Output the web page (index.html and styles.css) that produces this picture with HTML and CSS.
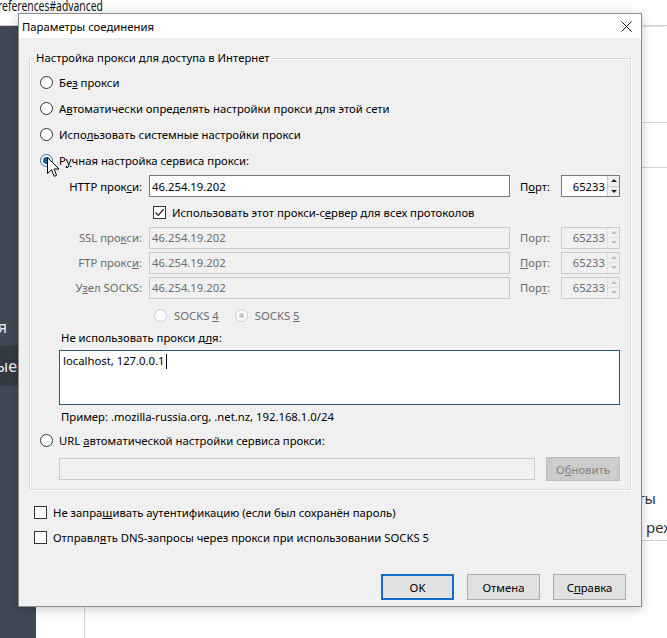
FILE: index.html
```html
<!DOCTYPE html>
<html lang="ru">
<head>
<meta charset="utf-8">
<title>Параметры соединения</title>
<link rel="stylesheet" href="styles.css">
</head>
<body>
<div class="page">
  <div class="urlbar"><span class="url">references#advanced</span></div>
  <div class="main">
    <aside class="sidebar">
      <div class="side-item side-a"><span>Синхронизация</span></div>
      <div class="side-item side-b"><span>Дополнительные</span></div>
    </aside>
    <div class="content">
      <div class="content-inner">
        <div class="pane pane-top"></div>
        <div class="pane pane-box"></div>
        <div class="pane pane-gap"></div>
        <div class="pane-text pane-t1">Настроить параметры работы</div>
        <div class="pane-text pane-t2"><span>Автономный режим</span></div>
        <div class="pane pane-rule"></div>
      </div>
    </div>
  </div>
</div>

<div class="dialog">
  <div class="titlebar">
    <span class="title">Параметры соединения</span>
    <span class="close">
      <svg width="11" height="11" viewBox="0 0 11 11"><path d="M0.5 0.5 L10.5 10.5 M10.5 0.5 L0.5 10.5" stroke="#1a1a1a" stroke-width="1" fill="none"/></svg>
    </span>
  </div>
  <div class="body">
    <fieldset class="group">
      <legend>Настройка прокси для доступа в Интернет</legend>
      <div class="group-inner">
        <div class="row radio-row"><span class="radio"></span><span>Бе<u>з</u> прокси</span></div>
        <div class="row radio-row"><span class="radio"></span><span>А<u>в</u>томатически определять настройки прокси для этой сети</span></div>
        <div class="row radio-row"><span class="radio"></span><span>Испо<u>л</u>ьзовать системные настройки прокси</span></div>
        <div class="row radio-row"><span class="radio radio-on"></span><span>Р<u>у</u>чная настройка сервиса прокси:</span></div>

        <div class="row proxy-row">
          <span class="plabel">HTTP прок<u>с</u>и:</span>
          <span class="edit host">46.254.19.202</span>
          <span class="portlabel">П<u>о</u>рт:</span>
          <span class="edit port"><span class="portval">65233</span><span class="spin"><span class="spin-up"></span><span class="spin-down"></span></span></span>
        </div>
        <div class="row check-row all-proto"><span class="check check-on"><svg width="11" height="11" viewBox="0 0 11 11"><path d="M1.5 5.5 L4.3 8.4 L9.6 2.2" stroke="#222" stroke-width="1.3" fill="none"/></svg></span><span>Использовать этот прокси-с<u>е</u>рвер для всех протоколов</span></div>

        <div class="row proxy-row proxy-small disabled">
          <span class="plabel">SSL про<u>к</u>си:</span>
          <span class="edit host">46.254.19.202</span>
          <span class="portlabel">Порт:</span>
          <span class="edit port"><span class="portval">65233</span><span class="spin"><span class="spin-up"></span><span class="spin-down"></span></span></span>
        </div>
        <div class="row proxy-row proxy-small disabled">
          <span class="plabel">FTP прокс<u>и</u>:</span>
          <span class="edit host">46.254.19.202</span>
          <span class="portlabel"><u>П</u>орт:</span>
          <span class="edit port"><span class="portval">65233</span><span class="spin"><span class="spin-up"></span><span class="spin-down"></span></span></span>
        </div>
        <div class="row proxy-row proxy-small disabled">
          <span class="plabel">У<u>з</u>ел SOCKS:</span>
          <span class="edit host">46.254.19.202</span>
          <span class="portlabel">Пор<u>т</u>:</span>
          <span class="edit port"><span class="portval">65233</span><span class="spin"><span class="spin-up"></span><span class="spin-down"></span></span></span>
        </div>

        <div class="row socks-row disabled">
          <span class="radio radio-dis"></span><span class="socks4">SOCKS <u>4</u></span>
          <span class="radio radio-dis radio-dis-on"></span><span>SOCKS <u>5</u></span>
        </div>

        <div class="sub label-row">Не использовать прокси д<u>л</u>я:</div>
        <div class="sub textarea"><span>localhost, 127.0.0.1</span><span class="caret"></span></div>
        <div class="sub example">Пример: .mozilla-russia.org, .net.nz, 192.168.1.0/24</div>

        <div class="row radio-row url-radio"><span class="radio"></span><span>URL <u>а</u>втоматической настройки сервиса прокси:</span></div>
        <div class="sub url-row">
          <span class="edit url-edit"></span>
          <span class="btn btn-dis">О<u>б</u>новить</span>
        </div>
      </div>
    </fieldset>

    <div class="row check-row bottom-check first"><span class="check"></span><span>Не запра<u>ш</u>ивать аутентификацию (если был сохранён пароль)</span></div>
    <div class="row check-row bottom-check"><span class="check"></span><span>Отправл<u>я</u>ть DNS-запросы через прокси при использовании SOCKS 5</span></div>

    <div class="buttons">
      <span class="btn btn-default">OK</span>
      <span class="btn">Отмена</span>
      <span class="btn">С<u>п</u>равка</span>
    </div>
  </div>
  <svg class="cursor" width="13" height="21" viewBox="0 0 13 21"><path d="M0.5 0.5 L0.5 16.5 L4.5 12.8 L7.2 19.3 L9.6 18.3 L7 12 L12 12 Z" fill="#fff" stroke="#000" stroke-width="1" stroke-linejoin="miter"/></svg>
</div>
</body>
</html>
```
FILE: styles.css
```css
* { box-sizing: border-box; }
html, body { margin: 0; padding: 0; }
body {
  width: 667px;
  height: 638px;
  overflow: hidden;
  background: #fff;
  font-family: "Noto Sans", "Open Sans", sans-serif;
  position: relative;
}

/* background page */
.page { display: flex; flex-direction: column; height: 638px; }
.urlbar {
  height: 26px;
  border-bottom: 1px solid #d0d0d0;
  box-shadow: 0 4px 0 -3px #e6e6e6;
  overflow: hidden;
  white-space: nowrap;
}
.url {
  display: block;
  margin-left: -2px;
  margin-top: -2px;
  font-size: 14px;
  line-height: 16px;
  color: #111;
  transform: scaleX(0.74);
  transform-origin: 0 0;
}
.main { flex: 1; display: flex; }
.sidebar {
  width: 36px;
  background: #3f4853;
  display: flex;
  flex-direction: column;
  padding-top: 286px;
}
.side-item {
  display: flex;
  justify-content: flex-end;
  align-items: center;
  overflow: hidden;
  white-space: nowrap;
  color: #e8eaed;
  font-size: 16px;
}
.side-a { height: 30px; padding-right: 29px; }
.side-b { height: 40px; padding-right: 19px; background: #333a43; margin-top: 4px; }

.content { flex: 1; padding-left: 48px; min-width: 0; }
.content-inner {
  height: 100%;
  border-left: 1px solid #d4d4d4;
  display: flex;
  flex-direction: column;
}
.pane-top { height: 96px; }
.pane-box { height: 46px; border-top: 1px solid #d8d8d8; border-bottom: 1px solid #d8d8d8; }
.pane-gap { height: 317px; }
.pane-text { font-size: 15px; color: #333; height: 26px; line-height: 26px; white-space: nowrap; overflow: hidden; }
.pane-t1 { text-align: right; padding-right: 11px; }
.pane-t2 { margin-top: 3px; padding-left: 464px; }
.pane-rule { height: 1px; background: #d0d0d0; margin-top: 0; }

/* dialog */
.dialog {
  position: absolute;
  left: 18px;
  top: 13px;
  width: 624px;
  height: 594px;
  border: 1px solid #8e8e8e;
  background: #f0f0f0;
  box-shadow: 0 2px 10px rgba(0,0,0,0.22);
  display: flex;
  flex-direction: column;
  font-size: 11.3px;
  color: #000;
}
.titlebar {
  height: 24px;
  background: #fff;
  display: flex;
  align-items: center;
  justify-content: space-between;
  padding-left: 3px;
}
.title { font-size: 11.3px; }
.close { width: 30px; height: 24px; display: flex; align-items: center; justify-content: center; }

.body {
  flex: 1;
  padding: 12px 10px 0 10px;
  display: flex;
  flex-direction: column;
}
.group {
  margin: 0;
  padding: 0;
  border: 1px solid #d9d9d9;
  box-shadow: inset 1px 1px 0 #fff, 1px 1px 0 #fff;
  min-width: 0;
}
.group legend {
  margin-left: 4px;
  padding: 0 2px;
  line-height: 16px;
  font-size: 11.3px;
}
.group-inner { padding: 3px 10px 8px 10px; display: flex; flex-direction: column; }

.row { display: flex; align-items: center; white-space: nowrap; }
.radio-row { height: 26px; }
.radio {
  width: 13px;
  height: 13px;
  border: 1px solid #333;
  border-radius: 50%;
  background: #fff;
  margin-right: 6px;
  flex: none;
  position: relative;
}
.radio-on { border-color: #1f6aa5; }
.radio-on::after {
  content: "";
  position: absolute;
  left: 2px; top: 2px;
  width: 7px; height: 7px;
  border-radius: 50%;
  background: #1f5f92;
}

.proxy-row { height: 26px; }
.proxy-small { height: 25px; }
.plabel { width: 102px; text-align: right; margin-right: 7px; }
.edit {
  height: 22px;
  background: #fff;
  border: 1px solid #7a7a7a;
  display: flex;
  align-items: center;
  padding-left: 2px;
}
.host { width: 361px; }
.portlabel { width: 41px; margin-left: 10px; }
.port { width: 59px; justify-content: flex-end; padding-left: 0; }
.portval { margin-right: 2px; }
.spin { width: 12px; height: 20px; display: flex; flex-direction: column; border-left: 1px solid #ccc; }
.spin-up, .spin-down { flex: 1; position: relative; background: #f0f0f0; }
.spin-up { border-bottom: 1px solid #ccc; }
.spin-up::after, .spin-down::after {
  content: "";
  position: absolute;
  left: 3px;
  border-left: 3px solid transparent;
  border-right: 3px solid transparent;
}
.spin-up::after { top: 3px; border-bottom: 3px solid #222; }
.spin-down::after { top: 3px; border-top: 3px solid #222; }

.disabled { color: #6d6d6d; }
.disabled .edit { background: #f0f0f0; border-color: #cccccc; }
.disabled .spin { border-left-color: #e0e0e0; }
.disabled .spin-up { border-bottom-color: #e0e0e0; }
.disabled .spin-up::after { border-bottom-color: #bdbdbd; }
.disabled .spin-down::after { border-top-color: #bdbdbd; }

.check-row { height: 26px; }
.all-proto { margin-left: 113px; }
.check {
  width: 13px;
  height: 13px;
  border: 1px solid #333;
  background: #fff;
  margin-right: 6px;
  flex: none;
  display: flex;
  align-items: center;
  justify-content: center;
}

.socks-row { height: 30px; padding-left: 114px; }
.radio-dis { border-color: #cfcfcf; background: #fbfbfb; margin-right: 7px; }
.socks4 { margin-right: 16px; }
.radio-dis-on::after {
  content: "";
  position: absolute;
  left: 3px; top: 3px;
  width: 5px; height: 5px;
  border-radius: 50%;
  background: #c6c6c6;
}

.sub { margin-left: 19px; }
.label-row { height: 16px; line-height: 16px; padding-left: 2px; }
.textarea {
  margin-top: 4px;
  height: 55px;
  background: #fff;
  border: 1px solid #2a5d7c;
  padding: 2px 3px;
  display: flex;
  align-items: flex-start;
  line-height: 16px;
}
.caret { display: inline-block; width: 1px; height: 15px; background: #000; margin-left: 1px; margin-top: 1px; }
.example { margin-top: 4px; height: 16px; line-height: 16px; padding-left: 2px; }
.url-radio { height: 30px; }
.url-row { display: flex; align-items: center; height: 24px; margin-top: 2px; }
.url-edit { width: 476px; background: #f0f0f0; border-color: #cccccc; margin-right: 11px; }

.btn {
  height: 26px;
  width: 73px;
  background: #e1e1e1;
  border: 1px solid #adadad;
  display: flex;
  align-items: center;
  justify-content: center;
}
.btn-dis { width: 74px; height: 24px; background: #cccccc; border-color: #bfbfbf; color: #838383; }
.btn-default { border: 2px solid #0e6fc4; }

.bottom-check { height: 25px; padding-left: 5px; }
.bottom-check.first { margin-top: 10px; }
.bottom-check .check { border-color: #333; }

.buttons { display: flex; justify-content: flex-end; gap: 13px; margin-top: 24px; padding-right: 5px; }

.cursor { position: absolute; left: 28px; top: 143px; }
```
